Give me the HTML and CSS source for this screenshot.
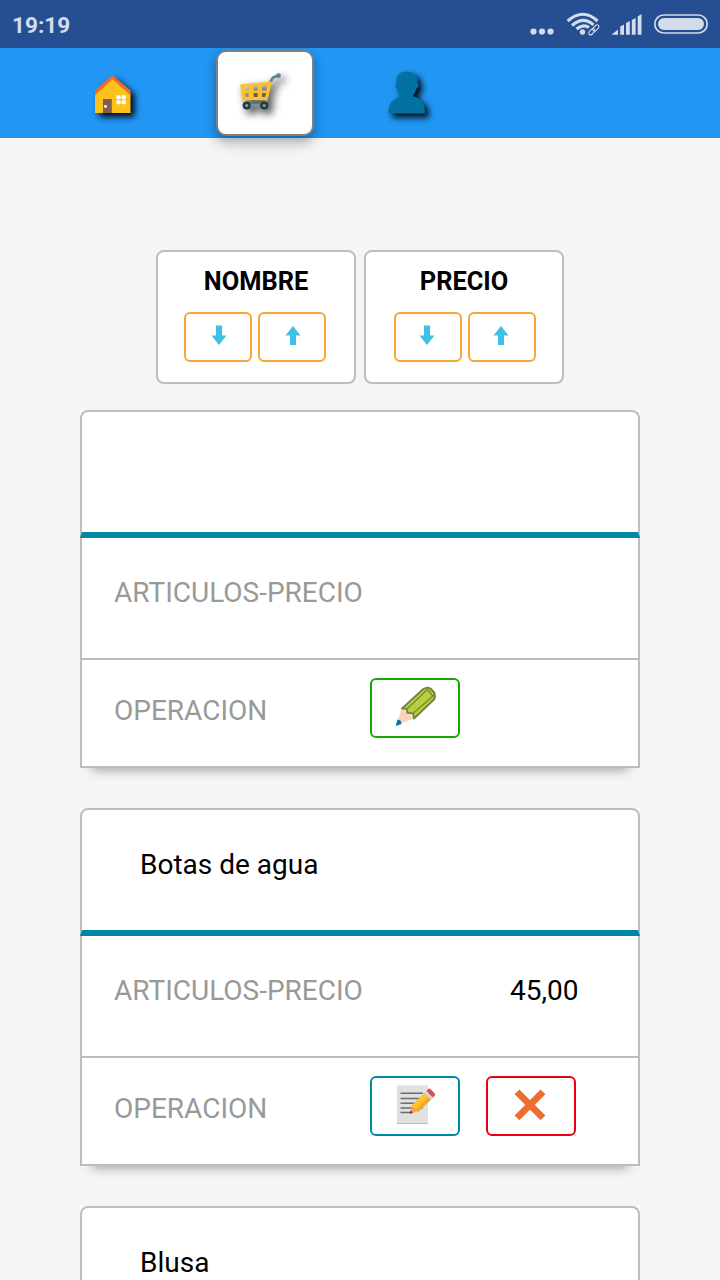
FILE: index.html
```html
<!DOCTYPE html>
<html lang="es">
<head>
<meta charset="utf-8">
<meta name="viewport" content="width=device-width">
<title>Artículos</title>
<link rel="stylesheet" href="styles.css">
</head>
<body>
<svg class="defs" width="0" height="0" aria-hidden="true">
  <symbol id="arrow-down" viewBox="0 0 16 20"><path fill="#40c0e7" d="M5 .5h6v10h4.500L8 20 .5 10.500H5z"/></symbol>
  <symbol id="arrow-up" viewBox="0 0 16 20"><path fill="#40c0e7" d="M5 20h6v-9.500h4.500L8 1 .5 10.500H5z"/></symbol>
</svg>
<header class="status">
  <span class="clock">19:19</span>
  <svg class="status-icons" width="180" height="26" viewBox="529 11 180 26" fill="#d4dcea">
    <circle cx="533.500" cy="31.500" r="3.100"/><circle cx="542" cy="31.500" r="3.100"/><circle cx="550.500" cy="31.500" r="3.100"/>
    <g fill="none" stroke="#d4dcea" stroke-width="3.100">
      <path d="M567.700 21Q583 7.500 597.500 21"/>
      <path d="M572 25.500Q583 15.500 593.500 24.800"/>
      <path d="M576.500 29Q583 23.500 589 27.500"/>
    </g>
    <circle cx="582.500" cy="32" r="2.700"/>
    <g fill="none" stroke="#d4dcea" stroke-width="1.100">
      <rect x="-3.600" y="-1.900" width="7.200" height="3.800" rx="1.900" transform="translate(591.800 31.700) rotate(-45)"/>
      <rect x="-3.600" y="-1.900" width="7.200" height="3.800" rx="1.900" transform="translate(595.800 28) rotate(-45)"/>
    </g>
    <path d="M611.500 34.800 618 29.500v5.300zM620.200 26.500l3.800-2v10.300h-3.800zM626 23l3.800-2v13.800H626zM631.800 20l3.800-2v16.800h-3.800zM637.700 16.500l3.800-2.500v20.800h-3.800z"/>
    <rect x="654.800" y="15" width="52.400" height="18" rx="9" fill="none" stroke="#d4dcea" stroke-width="1.700"/>
    <rect x="658" y="18" width="46" height="12" rx="6"/>
  </svg>
</header>
<nav class="nav">
  <a class="tab tab-home">
    <svg class="shadowed" width="38" height="40" viewBox="95 74 38 40">
      <path fill="#fcc21b" d="M113.500 78 96 94v19h35.500V94z"/>
      <path fill="#ed6c30" d="M113.500 75 96 90.500v4.800l17.500-16 18 16v-4.800z"/>
      <path fill="#855c52" d="M104 99h8.800v14H104z"/><circle cx="106.500" cy="106.500" r="1.400" fill="#fff"/>
      <g fill="#fff"><rect x="117.300" y="95.300" width="4.300" height="4" rx="1.200"/><rect x="122.600" y="95.300" width="4.300" height="4" rx="1.200"/><rect x="117.300" y="100.300" width="4.300" height="4" rx="1.200"/><rect x="122.600" y="100.300" width="4.300" height="4" rx="1.200"/></g>
    </svg>
  </a>
  <a class="tab tab-cart">
    <svg class="shadowed" width="44" height="40" viewBox="238 72 44 40">
      <path d="M269.500 84l2-4q1.500-4 7-4.200" fill="none" stroke="#5a8790" stroke-width="2.800"/>
      <circle cx="278.500" cy="75.700" r="2.400" fill="#5a8790"/>
      <path d="M267 100l-3 5.500H246" fill="none" stroke="#6a9299" stroke-width="3.500"/>
      <path fill="#fcc12c" fill-rule="evenodd" d="M240 84.500l32-3-4.500 18.800h-25zM244.700 87q0-1 1-1h1.800q1 0 1 1v3.600h-3.800zM253.600 86.800q0-1 1-1h2q1 0 1 1v3.800h-4zM262 86.300q0-1 1-1h3.500q.8 0 .6 1l-.5 4.300H262zM244.700 93h3.800v4h-2.800q-1 0-1-1zM253.600 93h4v4h-3q-1 0-1-1zM262 93h4.200l-.7 3.200q-.2.800-1 .8H262z"/>
      <g fill="#78949a" stroke="#26373d" stroke-width="2.400"><circle cx="246.700" cy="105.500" r="2.900"/><circle cx="264.200" cy="105.500" r="2.900"/></g>
    </svg>
  </a>
  <a class="tab tab-user">
    <svg class="shadowed" width="38" height="43" viewBox="388 70.500 38 43" fill="#0371a3">
      <path d="M406.500 71c8 0 11.500 5 11 11.500 1.800.8 1.300 5-.7 5-1 4-3.300 6.300-3.800 8.500 6 .8 12 5.500 12.200 17h-37c0-9.500 4.300-14.500 12.300-17-.5-2.200-2.500-4-3.500-8-1.800-1-1.800-4.500-.7-5.500C395.500 75.500 399 71 406.500 71z"/>
    </svg>
  </a>
</nav>
<main class="content">
  <section class="sort">
    <div class="sort-box sort-name">
      <h2 class="sort-title">NOMBRE</h2>
      <div class="sort-buttons">
        <button class="sort-btn" aria-label="Nombre descendente"><svg width="16" height="20"><use href="#arrow-down"/></svg></button>
        <button class="sort-btn" aria-label="Nombre ascendente"><svg width="16" height="20"><use href="#arrow-up"/></svg></button>
      </div>
    </div>
    <div class="sort-box sort-price">
      <h2 class="sort-title">PRECIO</h2>
      <div class="sort-buttons">
        <button class="sort-btn" aria-label="Precio descendente"><svg width="16" height="20"><use href="#arrow-down"/></svg></button>
        <button class="sort-btn" aria-label="Precio ascendente"><svg width="16" height="20"><use href="#arrow-up"/></svg></button>
      </div>
    </div>
  </section>
  <article class="card">
    <div class="row name"></div>
    <div class="row price"><span class="label">ARTICULOS-PRECIO</span></div>
    <div class="row actions"><span class="label">OPERACION</span>
      <button class="action add" aria-label="Añadir">
        <svg width="42" height="42" viewBox="395 685 42 42">
          <path fill="#fcd4b5" d="M402 708l-6 17.500 18-7z"/>
          <path fill="#0371a3" d="M397.500 719.500l-1.800 6.400 5.800-1.900-1-3.500z"/>
          <path fill="#b9cf3c" stroke="#74863b" stroke-width="1.900" stroke-linejoin="round" d="M402 708.500l21-19.200q4-2.500 7.500-.8l4 4.500q1.200 3.500-.5 6.500L414 718.500l-1-5-5.500-.8-1-4z"/>
          <path fill="none" stroke="#74863b" stroke-width="1.200" d="M407 709l20.500-19.800M413 713.500l21-18.500M427.500 690l5.500 6"/>
        </svg>
      </button>
    </div>
  </article>
  <article class="card">
    <div class="row name"><span class="product">Botas de agua</span></div>
    <div class="row price"><span class="label">ARTICULOS-PRECIO</span><span class="amount">45,00</span></div>
    <div class="row actions"><span class="label">OPERACION</span>
      <button class="action edit" aria-label="Editar">
        <svg width="40" height="40" viewBox="396 1084 40 40">
          <path fill="#b0bec5" d="M397 1086h31v38h-31z"/><path fill="#e0e0e0" d="M397 1085.300h31v37.700h-31z"/>
          <path stroke="#667069" stroke-width="1.400" d="M400.500 1093.300H423M400.500 1098.500H421M400.500 1103.200H415M400.500 1108H423M400.500 1112.500h12"/>
          <path fill="#ffa24b" d="M412.500 1104l-2.800 9.400 9.300-2.400z"/><path fill="#543930" d="M410.800 1110.500l-1 3.200 3.200-1.300z"/>
          <path fill="#fdc229" d="M411.500 1105.500l13.800-13.200 6.700 6.200-14 13.500-2-3.500z"/>
          <path fill="#f5a91c" d="M416 1109l13.800-12.700 2.200 2.200-14 13.500z"/>
          <path fill="#cfd8dc" d="M424.300 1093.300l2.500-2.500 6.700 6.200-2.500 2.500z"/>
          <path fill="#dc4b50" d="M426.500 1091l1.700-2q1-1 2.200 0l4.300 4.500q.8 1 0 2l-1.900 2z"/>
        </svg>
      </button>
      <button class="action remove" aria-label="Eliminar">
        <svg width="40" height="40" viewBox="510.500 1084 40 40"><path d="M517.500 1091.800l26 26m0-26l-26 26" stroke="#ed6c30" stroke-width="6.800"/></svg>
      </button>
    </div>
  </article>
  <article class="card">
    <div class="row name last"><span class="product">Blusa</span></div>
  </article>
</main>
</body>
</html>
```
FILE: styles.css
```css
* { box-sizing: border-box; }
html, body { height: 1280px; }
body { margin: 0; overflow: hidden; background: #f5f5f5; color: #000; font-family: Roboto, sans-serif; font-size: 28px; line-height: 32px; }
svg { display: block; flex: none; }
.defs { position: absolute; }

.status { height: 48px; padding: 0 11px 0 12px; display: flex; align-items: center; justify-content: space-between; background: #264f93; }
.clock { padding-top: 4px; font-size: 22.600px; font-weight: 700; color: #d4dcea; }

.nav { height: 90px; display: grid; grid-template-columns: 216px 98px 186px; align-items: center; background: #2196f3; }
.tab { display: flex; align-items: center; justify-content: center; }
.shadowed { filter: drop-shadow(4px 4px 3px rgba(0, 0, 0, .95)); }
.tab-home { padding: 2px 0 0 10px; }
.tab-cart { height: 86px; padding-bottom: 2px; padding-right: 11px; background: #fff; border: 2px solid #808080; border-radius: 10px; box-shadow: 0 8px 14px rgba(0, 0, 0, .18), 0 4px 10px rgba(0, 0, 0, .18); }
.tab-cart .shadowed { filter: drop-shadow(4px 4px 4px rgba(0, 0, 0, .9)); }
.tab-user { padding-bottom: 2px; }

.content { padding: 112px 80px 0; }
.sort { display: flex; justify-content: center; gap: 8px; }
.sort-box { width: 200px; height: 134px; padding-top: 13px; background: #fff; border: 2px solid #bdbdbd; border-radius: 8px; }
.sort-title { margin: 0 0 15px; font-size: 25.400px; line-height: 32px; font-weight: 700; text-align: center; }
.sort-buttons { display: flex; gap: 6px; padding-left: 26px; }
.sort-price .sort-buttons { padding-left: 28px; }
.sort-btn { display: flex; justify-content: center; width: 68px; height: 50px; padding: 11px 0 0; background: #fff; border: 2px solid #f5a732; border-radius: 6px; }
.sort-name .sort-btn { padding-left: 2px; }
.sort-price .sort-btn { padding-right: 2px; }

.card { margin: 26px 0 40px; background: #fff; box-shadow: 0 14px 10px -12px rgba(0, 0, 0, .35); }
.card + .card { margin-top: 0; }
.row { display: flex; border: solid #bdbdbd; border-width: 0 2px 2px; padding-left: 32px; }
.name { height: 128px; padding: 39px 0 0 58px; border-top-width: 2px; border-bottom: 6px solid #0288a7; border-radius: 8px 8px 0 0; }
.price { height: 122px; padding-top: 39px; padding-right: 59.500px; justify-content: space-between; }
.actions { height: 108px; }
.label { color: #999; }
.actions .label { width: 256px; padding-top: 35px; }
.action { display: flex; justify-content: center; width: 90px; height: 60px; margin: 18px 26px 0 0; padding: 5px 0 0; background: #fff; border: 2px solid; border-radius: 6px; }
.add { color: #14a800; padding-left: 2px; }
.edit { color: #0288a7; padding-top: 6px; padding-left: 1px; }
.remove { color: #ed0016; padding-top: 6px; padding-right: 2px; }
```
